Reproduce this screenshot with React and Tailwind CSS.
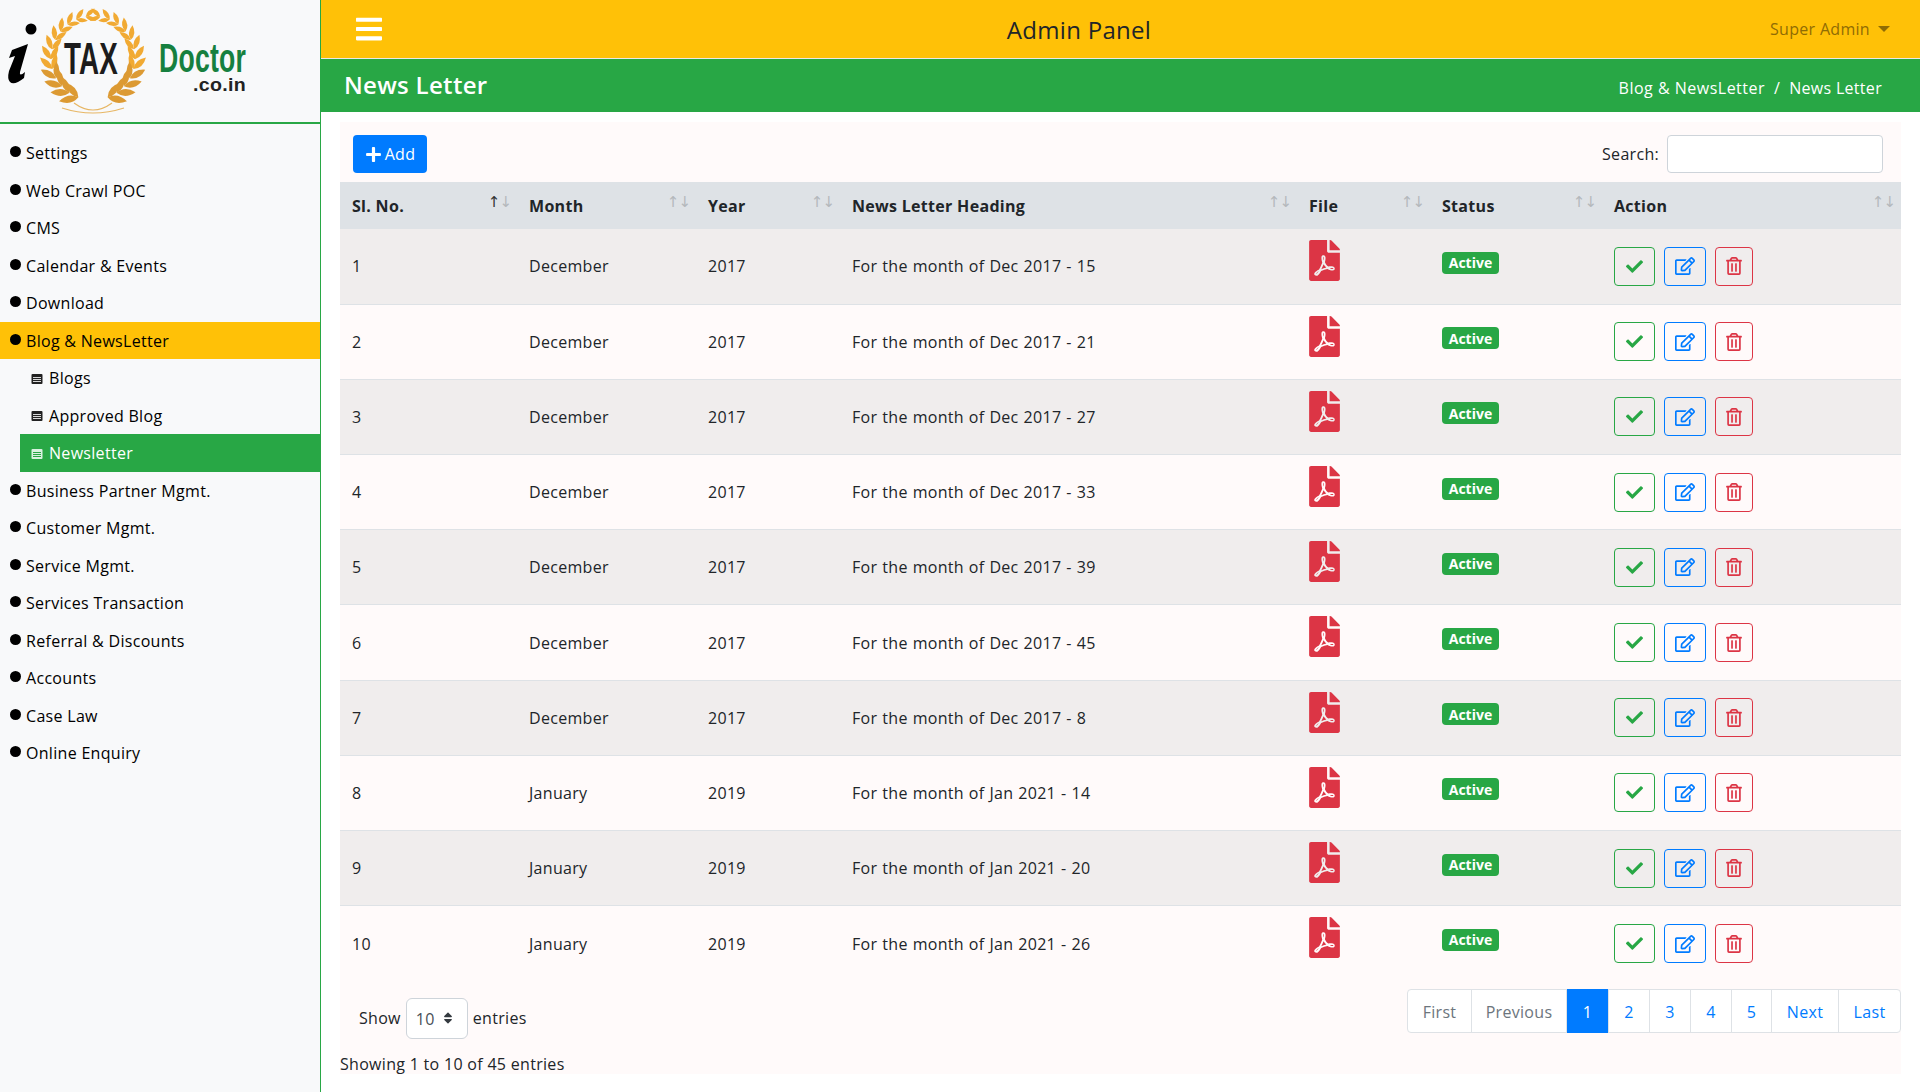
import React from 'react';
import { FaBars, FaCheck, FaFilePdf, FaPlus, FaRegEdit, FaRegTrashAlt, FaSort } from 'react-icons/fa';

const menu = [
  { label: 'Settings' },
  { label: 'Web Crawl POC' },
  { label: 'CMS' },
  { label: 'Calendar & Events' },
  { label: 'Download' },
  { label: 'Blog & NewsLetter', open: true },
  { label: 'Blogs', sub: true },
  { label: 'Approved Blog', sub: true },
  { label: 'Newsletter', sub: true, current: true },
  { label: 'Business Partner Mgmt.' },
  { label: 'Customer Mgmt.' },
  { label: 'Service Mgmt.' },
  { label: 'Services Transaction' },
  { label: 'Referral & Discounts' },
  { label: 'Accounts' },
  { label: 'Case Law' },
  { label: 'Online Enquiry' },
];

const rows = [
  ['December', '2017', 'For the month of Dec 2017 - 15'],
  ['December', '2017', 'For the month of Dec 2017 - 21'],
  ['December', '2017', 'For the month of Dec 2017 - 27'],
  ['December', '2017', 'For the month of Dec 2017 - 33'],
  ['December', '2017', 'For the month of Dec 2017 - 39'],
  ['December', '2017', 'For the month of Dec 2017 - 45'],
  ['December', '2017', 'For the month of Dec 2017 - 8'],
  ['January', '2019', 'For the month of Jan 2021 - 14'],
  ['January', '2019', 'For the month of Jan 2021 - 20'],
  ['January', '2019', 'For the month of Jan 2021 - 26'],
];

const columns = [
  { label: 'Sl. No.', width: 'w-[177px]', first: true },
  { label: 'Month', width: 'w-[179px]' },
  { label: 'Year', width: 'w-[144px]' },
  { label: 'News Letter Heading', width: 'w-[457px]' },
  { label: 'File', width: 'w-[133px]' },
  { label: 'Status', width: 'w-[172px]' },
  { label: 'Action', width: 'w-[299px]' },
];

const pages = [
  { label: 'First', width: 'w-[63px]', off: true },
  { label: 'Previous', width: 'w-[95px]', off: true },
  { label: '1', width: 'w-[42px]', active: true },
  { label: '2', width: 'w-[41px]' },
  { label: '3', width: 'w-[41px]' },
  { label: '4', width: 'w-[41px]' },
  { label: '5', width: 'w-[40px]' },
  { label: 'Next', width: 'w-[67px]' },
  { label: 'Last', width: 'w-[62px]' },
];

const leaf = (l, w) => `M0 0 Q${w} ${-l * 0.45} 0 ${-l} Q${-w} ${-l * 0.45} 0 0 Z`;

// one side of the wreath, top to bottom; mirrored for the other
const wreathSide = Array.from({ length: 12 }, (_, i) => {
  const theta = 10 + i * 13.6;
  const rad = (theta * Math.PI) / 180;
  const x = 93 + 42 * Math.sin(rad);
  const y = 58 - 42 * Math.cos(rad);
  const l = 12 + i * 0.7;
  const w = 4.4 + i * 0.25;
  const color = i > 7 ? '#dc9a33' : '#f1aa33';
  return (
    <g key={i} transform={`translate(${x} ${y}) rotate(${theta - 90})`}>
      <path d={leaf(l, w)} fill={color} transform="rotate(32)" />
      <path d={leaf(l - 1, w - 0.4)} fill={color} transform="rotate(-30)" />
    </g>
  );
});

function Logo() {
  return (
    <svg width="320" height="122" viewBox="0 0 320 122">
      <circle cx="31" cy="29" r="5.5" fill="#000" />
      <path d="M12 50 L28 44 L20 72 Q19 77 25 72 L24 78 Q14 86 10 82 Q7 79 9 71 L15 56 L9 58 Z" fill="#000" />
      <g>{wreathSide}</g>
      <g transform="matrix(-1 0 0 1 186 0)">{wreathSide}</g>
      <path d="M62 108 Q93 118 124 108 M74 103 Q93 117 112 103" stroke="#e7b765" strokeWidth="1.2" fill="none" />
      <text x="64" y="74" textLength="54" lengthAdjust="spacingAndGlyphs" fontFamily="Liberation Sans, sans-serif" fontWeight="700" fontSize="45" fill="#1c1c1c">TAX</text>
      <text x="159" y="72" textLength="87" lengthAdjust="spacingAndGlyphs" fontFamily="Liberation Sans, sans-serif" fontWeight="700" fontSize="41" fill="#16803f">Doctor</text>
      <text x="193" y="91" textLength="53" lengthAdjust="spacingAndGlyphs" fontFamily="Liberation Sans, sans-serif" fontWeight="700" fontSize="19" fill="#222">.co.in</text>
    </svg>
  );
}

function SubIcon({ current }) {
  const body = current ? '#d8f1df' : '#222';
  const line = current ? '#28a745' : '#d8d8d8';
  return (
    <svg width="12" height="10" viewBox="0 0 12 10" className="mr-[6px] mt-[2px] shrink-0">
      <rect x="0.5" y="0" width="11" height="10" rx="1" fill={body} />
      <path d="M2 3.5H10M2 5.5H10M2 7.5H10" stroke={line} strokeWidth="1" />
    </svg>
  );
}

function MenuItem({ item }) {
  if (item.sub) {
    return (
      <div className={`h-[37.5px] flex items-center ml-5 pl-[11px] ${item.current ? 'bg-[#28a745] text-white' : 'text-[#000]'}`}>
        <SubIcon current={item.current} />
        <span className="mt-[1px]">{item.label}</span>
      </div>
    );
  }
  return (
    <div className={`h-[37.5px] flex items-center pl-[10px] text-[#000] ${item.open ? 'bg-[#ffc107]' : ''}`}>
      <span className="w-[11px] h-[11px] rounded-full bg-black mr-[5px] -mt-[2px]" />
      <span className="mt-[1px]">{item.label}</span>
    </div>
  );
}

function Sidebar() {
  return (
    <aside className="w-[320px] shrink-0 bg-[#f8f9fa]">
      <div className="h-[124px] border-b-2 border-[#28a745] overflow-hidden">
        <Logo />
      </div>
      <nav className="pt-[10px]">
        {menu.map((item) => (
          <MenuItem key={item.label} item={item} />
        ))}
      </nav>
    </aside>
  );
}

function ActionButton({ color, width, children }) {
  return (
    <button className={`h-[39px] ${width} flex items-center justify-center border rounded-[4px] ${color}`}>
      {children}
    </button>
  );
}

function NewsTable() {
  return (
    <table className="w-[1561px] table-fixed border-collapse">
      <thead>
        <tr className="h-[47px] bg-[#dee2e6] text-[#212529]">
          {columns.map((col) => (
            <th key={col.label} className={`${col.width} pl-3 pr-[3px] text-left font-bold`}>
              <div className="flex items-center justify-between">
                <span>{col.label}</span>
                <span className="flex text-[15px] leading-none -mt-[7px] mr-[3px] font-normal tracking-[-1px]" style={{ fontFamily: 'DejaVu Sans, sans-serif' }}>
                  <span className={col.first ? 'text-[#333]' : 'text-[#b4b8bc]'}>↑</span>
                  <span className="text-[#b4b8bc]">↓</span>
                </span>
              </div>
            </th>
          ))}
        </tr>
      </thead>
      <tbody>
        {rows.map((row, i) => (
          <tr key={row[2]} className={`h-[75.2px] ${i < 9 ? 'border-b border-[#dee2e6]' : ''} ${i % 2 === 0 ? 'bg-[#f0eded]' : ''}`}>
            <td className="pl-3 text-[#212529]">{i + 1}</td>
            <td className="pl-3 text-[#212529]">{row[0]}</td>
            <td className="pl-3 text-[#212529]">{row[1]}</td>
            <td className="pl-3 text-[#212529] [word-spacing:0.5px]">{row[2]}</td>
            <td className="pl-3 align-top pt-[11px]">
              <FaFilePdf className="w-[31px] h-[41px] text-[#dc3545]" />
            </td>
            <td className="pl-3 align-top pt-[21px]">
              <span className="inline-flex items-center justify-center w-[57px] h-[22px] rounded-[4px] bg-[#28a745] text-white text-[14px] font-bold tracking-normal">Active</span>
            </td>
            <td className="pl-3">
              <div className="flex gap-[9px]">
                <ActionButton color="border-[#28a745] text-[#28a745]" width="w-[41px]"><FaCheck className="w-[17px] h-[17px]" /></ActionButton>
                <ActionButton color="border-[#007bff] text-[#007bff]" width="w-[42px]"><FaRegEdit className="w-[20px] h-[20px]" /></ActionButton>
                <ActionButton color="border-[#dc3545] text-[#dc3545]" width="w-[38px]"><FaRegTrashAlt className="w-[16px] h-[18px]" /></ActionButton>
              </div>
            </td>
          </tr>
        ))}
      </tbody>
    </table>
  );
}

function Pagination() {
  return (
    <div className="flex h-[44px] border border-[#dee2e6] rounded-[4px] bg-white">
      {pages.map((p, i) => (
        <a
          key={p.label}
          className={`${p.width} flex items-center justify-center pt-[2px] ${i > 0 ? 'border-l border-[#dee2e6]' : ''} ${p.active ? 'bg-[#007bff] text-white -my-px' : p.off ? 'text-[#6c757d]' : 'text-[#007bff]'}`}
        >
          {p.label}
        </a>
      ))}
    </div>
  );
}

export default function App() {
  return (
    <div className="w-[1920px] h-[1092px] flex overflow-hidden bg-white text-[16px] tracking-[0.3px]" style={{ fontFamily: '"Open Sans", "Noto Sans", sans-serif' }}>
      <Sidebar />
      <main className="flex-1 border-l border-[#28a745] min-w-0">
        <header className="h-[59px] bg-[#ffc107] border-b border-[#e9e9e9] flex items-center justify-between pl-[35px] pr-[30px]">
          <FaBars className="w-[26px] h-[30px] text-white" />
          <h1 className="text-[24px] text-[#212529] mt-[2px] -mr-[6px]">Admin Panel</h1>
          <div className="flex items-center gap-2 text-[#8f6c04]">
            <span>Super Admin</span>
            <span className="w-0 h-0 border-x-[6px] border-x-transparent border-t-[6px] border-t-[#8f6c04]" />
          </div>
        </header>
        <div className="h-[53px] bg-[#28a745] text-white flex items-center justify-between pl-[23px] pr-[38px]">
          <h2 className="text-[24px] font-semibold -mt-[2px]">News Letter</h2>
          <div className="flex gap-[9px] mt-[4px]">
            <span className="tracking-[0.5px]">Blog &amp; NewsLetter</span>
            <span>/</span>
            <span>News Letter</span>
          </div>
        </div>
        <section className="w-[1561px] h-[952px] mt-[10px] ml-[19px] bg-[#fffafa]">
          <div className="h-[60px] flex items-start justify-between pt-[13px] pl-[13px] pr-[18px]">
            <button className="h-[38px] w-[74px] rounded-[4px] bg-[#007bff] text-white flex items-center justify-center gap-[3px]">
              <FaPlus className="w-[17px] h-[17px]" />
              Add
            </button>
            <label className="flex items-center gap-2 text-[#212529]">
              Search:
              <input className="w-[216px] h-[38px] bg-white border border-[#ced4da] rounded-[4px]" />
            </label>
          </div>
          <NewsTable />
          <div className="flex justify-between items-start">
            <div className="pt-[17px] pl-[19px] flex items-center gap-[5px] text-[#212529]">
              <span>Show</span>
              <span className="w-[62px] h-[41px] bg-white border border-[#ced4da] rounded-[6px] flex items-center pl-[9px] gap-[6px] text-[#495057]">
                <span className="mt-[2px]">10</span>
                <FaSort className="w-[14px] h-[14px] text-[#343a40]" />
              </span>
              <span>entries</span>
            </div>
            <div className="pt-[8px]">
              <Pagination />
            </div>
          </div>
          <p className="mt-[13px] text-[#212529]">Showing 1 to 10 of 45 entries</p>
        </section>
      </main>
    </div>
  );
}
